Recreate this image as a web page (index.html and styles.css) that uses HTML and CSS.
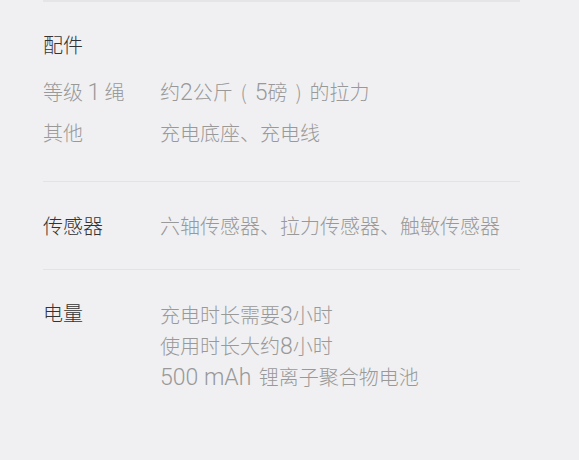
FILE: index.html
```html
<!DOCTYPE html>
<html lang="zh-CN">
<head>
    <meta charset="UTF-8">
    <meta name="viewport" content="width=device-width, initial-scale=1.0">
    <title>规格参数</title>
    <link rel="stylesheet" href="styles.css">
</head>
<body>
    <div class="specs">
        <div class="section accessories">
            <h3 class="section-title">配件</h3>
            <div class="sub-row">
                <div class="sub-label">等级 <span class="num">1</span> 绳</div>
                <div class="sub-value">约<span class="num">2</span>公斤<span class="paren">(</span><span class="num">5</span>磅<span class="paren">)</span>的拉力</div>
            </div>
            <div class="sub-row">
                <div class="sub-label">其他</div>
                <div class="sub-value">充电底座、充电线</div>
            </div>
        </div>

        <div class="section">
            <div class="row">
                <div class="label">传感器</div>
                <div class="value">六轴传感器、拉力传感器、触敏传感器</div>
            </div>
        </div>

        <div class="section battery">
            <div class="row">
                <div class="label">电量</div>
                <div class="value">
                    <div>充电时长需要<span class="num">3</span>小时</div>
                    <div>使用时长大约<span class="num">8</span>小时</div>
                    <div><span class="num unit">500 mAh</span> 锂离子聚合物电池</div>
                </div>
            </div>
        </div>
    </div>
</body>
</html>
```

FILE: styles.css
```css
body {
    margin: 0;
    background-color: #f0f0f2;
    font-family: "Noto Sans CJK SC", "Noto Sans", sans-serif;
    font-size: 20px;
    font-weight: 300;
    color: #333;
}

.specs {
    margin: 0 59px 0 43px;
    border-top: 2px solid #e5e5e8;
}

.section {
    padding: 29px 0 28px;
    border-bottom: 1px solid #e3e3e6;
}

.accessories {
    padding-top: 28px;
}

.section-title {
    margin: 0 0 11px;
    font-size: 20px;
    font-weight: 300;
    line-height: 30px;
    color: #333;
}

.sub-row {
    display: flex;
    line-height: 41px;
    color: #999;
}

.sub-label {
    width: 117px;
    flex-shrink: 0;
}

.num {
    font-family: Roboto, "Liberation Sans", sans-serif;
    font-size: 23px;
    font-weight: 300;
    line-height: 1;
}

.num.unit {
    margin-right: 3px;
}

.paren {
    display: inline-block;
    width: 1.1em;
    text-align: center;
}

.row {
    display: flex;
    align-items: flex-start;
    line-height: 30px;
}

.label {
    width: 117px;
    flex-shrink: 0;
    color: #333;
}

.value {
    color: #999;
}

.battery {
    padding-top: 29px;
    border-bottom: none;
}

.battery .label {
    line-height: 27px;
}

.battery .value {
    line-height: 31px;
}
```
